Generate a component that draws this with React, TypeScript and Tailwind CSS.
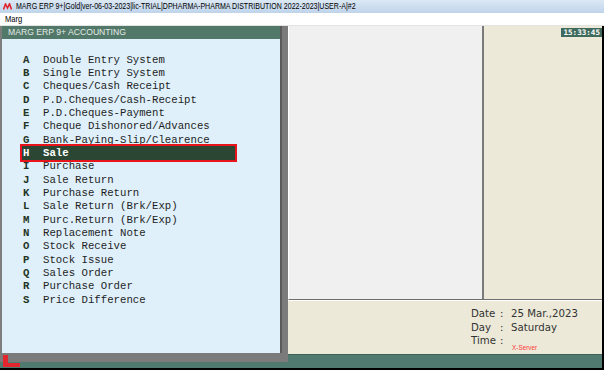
const menu = [
  ['A', 'Double Entry System'],
  ['B', 'Single Entry System'],
  ['C', 'Cheques/Cash Receipt'],
  ['D', 'P.D.Cheques/Cash-Receipt'],
  ['E', 'P.D.Cheques-Payment'],
  ['F', 'Cheque Dishonored/Advances'],
  ['G', 'Bank-Paying-Slip/Clearence'],
  ['H', 'Sale'],
  ['I', 'Purchase'],
  ['J', 'Sale Return'],
  ['K', 'Purchase Return'],
  ['L', 'Sale Return (Brk/Exp)'],
  ['M', 'Purc.Return (Brk/Exp)'],
  ['N', 'Replacement Note'],
  ['O', 'Stock Receive'],
  ['P', 'Stock Issue'],
  ['Q', 'Sales Order'],
  ['R', 'Purchase Order'],
  ['S', 'Price Difference'],
];

function MargLogo() {
  return (
    <svg width="9" height="7" viewBox="0 0 9 7" className="shrink-0">
      <polyline points="0.5,6.5 2.5,1 4.5,5 6.5,0.8 8.5,6.5" fill="none" stroke="#e3262e" strokeWidth="1.6" />
    </svg>
  );
}

export default function App() {
  return (
    <div className="w-[604px] h-[370px] flex flex-col overflow-hidden bg-black font-['Liberation_Sans',Arial,sans-serif]">
      {/* title bar */}
      <div className="h-[13px] flex items-center gap-[4px] pl-[3px] bg-gradient-to-b from-[#dce8f5] to-[#bfd4ea] text-[8.6px] text-black whitespace-nowrap">
        <MargLogo />
        <span className="origin-left scale-x-[0.82]">
          MARG ERP 9+|Gold|ver-06-03-2023|lic-TRIAL|DPHARMA-PHARMA DISTRIBUTION 2022-2023|USER-A|#2
        </span>
      </div>
      {/* menu bar */}
      <div className="h-[13px] flex items-center pl-[5px] bg-white text-[8.4px] text-black border-b border-[#e4e4e4]">
        <span className="origin-left scale-x-[0.9]">Marg</span>
      </div>

      {/* workspace */}
      <div className="h-[342px] flex pr-[2px]">
        {/* left window */}
        <div className="w-[288px] flex flex-col relative">
          <div className="h-[327px] flex">
            <div className="w-[280px] flex flex-col border-l-2 border-[#7d7d7d]">
              <div className="h-[13px] flex items-center pl-[6px] bg-[#517868] text-[#e4ebe7] text-[9.8px] whitespace-nowrap">
                <span className="origin-left scale-x-[0.88]">MARG ERP 9+ ACCOUNTING</span>
              </div>
              <div className="flex-1 bg-[#dff0fa] pt-[14px] pl-[20px] font-['Liberation_Mono','Courier_New',monospace] text-[10.7px] text-[#1e1e1e]">
                {menu.map(([k, label]) =>
                  k === 'H' ? (
                    <div
                      key={k}
                      className="w-[213px] h-[13.33px] flex items-center pl-[1px] bg-[#2b4733] text-white font-bold outline-2 outline-[#e8141c]"
                    >
                      <span className="w-[20px]">{k}</span>
                      <span>{label}</span>
                    </div>
                  ) : (
                    <div key={k} className="h-[13.33px] flex items-center pl-[1px] whitespace-pre">
                      <span className="w-[20px] font-bold text-[#243424]">{k}</span>
                      <span>{label}</span>
                    </div>
                  )
                )}
              </div>
            </div>
            <div className="w-[8px] bg-[#7b7b7b] border-l-2 border-[#5b5b5b]" />
          </div>
          <div className="h-[9px] bg-[#7b7b7b]" />
          <div className="h-[6px] bg-[#507a6f]" />
          <svg width="17" height="12" viewBox="0 0 17 12" className="absolute left-[3px] bottom-[1px]">
            <path d="M0 0 H5 V8 H17 V12 H0 Z" fill="#e3262e" />
          </svg>
        </div>

        {/* right side */}
        <div className="flex-1 flex flex-col">
          <div className="h-[274px] flex border-l border-white border-b border-b-[#6e6e6e]">
            <div className="w-[195px] bg-[#f0f0f0] border-r-2 border-[#7a7a7a]" />
            <div className="flex-1 bg-[#ece9d8] flex justify-end items-start pt-[2px]">
              <span className="h-[9px] px-[2px] flex items-center bg-[#3f6a5d] text-white font-['DejaVu_Sans_Mono',monospace] font-bold text-[7.6px] leading-none">
                15:33:45
              </span>
            </div>
          </div>
          <div className="h-[54px] bg-[#ece9d8] border-t border-white pt-[6px] pl-[183px] font-['DejaVu_Sans',Verdana,sans-serif] text-[10.2px] text-[#333] leading-[13.5px]">
            <div className="flex">
              <span className="w-[29px]">Date</span>
              <span className="w-[11px]">:</span>
              <span>25 Mar.,2023</span>
            </div>
            <div className="flex">
              <span className="w-[29px]">Day</span>
              <span className="w-[11px]">:</span>
              <span>Saturday</span>
            </div>
            <div className="flex">
              <span className="w-[29px]">Time</span>
              <span className="w-[11px]">:</span>
            </div>
            <div className="pl-[41px] -mt-[4px] text-[6.4px] leading-[8px] text-[#ff3b3b] font-['Liberation_Sans',Arial,sans-serif]">
              X-Server
            </div>
          </div>
          <div className="h-[14px] bg-[#507a6f] border-t border-[#3f5f56]" />
        </div>
      </div>
      <div className="h-[2px] bg-black" />
    </div>
  );
}
